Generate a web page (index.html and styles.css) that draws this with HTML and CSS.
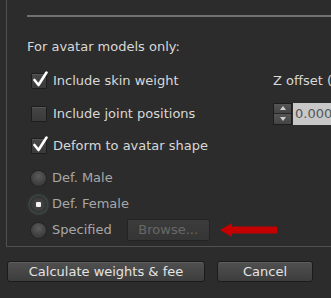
FILE: index.html
```html
<!DOCTYPE html>
<html>
<head>
	<link rel="stylesheet" href="styles.css">
</head>
<body>
	<div class="frame">
		<div class="sep"></div>
		<div class="heading">For avatar models only:</div>
		<div class="grid">
			<div class="row check-row">
				<span class="box"><svg class="tick" width="17" height="17" viewBox="0 0 17 17"><polyline points="2.5,9 6.5,14 14.5,1.5" fill="none" stroke="#fff" stroke-width="2.6" stroke-linecap="round" stroke-linejoin="round"/></svg></span>
				<span class="label">Include skin weight</span>
			</div>
			<div class="row check-row side">
				<span class="label">Z offset (</span>
			</div>
			<div class="row check-row">
				<span class="box"></span>
				<span class="label">Include joint positions</span>
			</div>
			<div class="row check-row side">
				<div class="spinner">
					<span class="spin up"></span>
					<span class="spin down"></span>
				</div>
				<div class="field">0.000</div>
			</div>
			<div class="row check-row last">
				<span class="box"><svg class="tick" width="17" height="17" viewBox="0 0 17 17"><polyline points="2.5,9 6.5,14 14.5,1.5" fill="none" stroke="#fff" stroke-width="2.6" stroke-linecap="round" stroke-linejoin="round"/></svg></span>
				<span class="label">Deform to avatar shape</span>
			</div>
		</div>
		<div class="radios">
			<div class="row radio-row">
				<span class="radio"></span>
				<span class="label dim">Def. Male</span>
			</div>
			<div class="row radio-row">
				<span class="radio on"></span>
				<span class="label dim">Def. Female</span>
			</div>
			<div class="row radio-row">
				<span class="radio"></span>
				<span class="label dim">Specified</span>
				<span class="browse">Browse...</span>
				<svg class="arrow" width="58" height="14" viewBox="0 0 58 14"><polygon points="0,7 12,0 12,3.5 57,3.5 57,10.5 12,10.5 12,14" fill="#c40000"/></svg>
			</div>
		</div>
	</div>
	<div class="buttons">
		<button class="btn calc">Calculate weights &amp; fee</button>
		<button class="btn cancel">Cancel</button>
	</div>
</body>
</html>
```

FILE: styles.css
```css
html {
	background: #2c2c2c;
}
body {
	margin: 0;
	font-family: "DejaVu Sans", sans-serif;
	font-size: 13px;
	color: #d8d8d8;
	overflow: hidden;
}
.frame {
	margin-left: 6px;
	height: 247px;
	border-left: 1px solid #505050;
	border-bottom: 1px solid #505050;
	padding: 15px 0 0 20px;
	box-sizing: border-box;
}
.sep {
	height: 2px;
	background: #6f6f6f;
}
.heading {
	margin-top: 22px;
	line-height: 16px;
	height: 25px;
}
.grid {
	display: grid;
	grid-template-columns: 246px 1fr;
	grid-template-rows: 33px 33px 32px;
}
.row {
	display: flex;
	align-items: center;
}
.check-row {
	padding-left: 4px;
}
.side {
	padding-left: 0;
}
.last {
	grid-column: 1;
}
.box {
	position: relative;
	width: 14px;
	height: 14px;
	border: 1px solid #1d1d1d;
	background: linear-gradient(#464646, #3a3a3a);
	box-shadow: inset 0 1px 0 #555;
	border-radius: 1px;
	margin-right: 6px;
	flex: none;
}
.tick {
	position: absolute;
	left: 0;
	top: -3px;
}
.label {
	line-height: 16px;
}
.dim {
	color: #a8a8a8;
}
.spinner {
	display: flex;
	flex-direction: column;
	width: 19px;
	height: 22px;
	border: 1px solid #1d1d1d;
	box-sizing: border-box;
	background: #3e3e3e;
}
.spin {
	flex: 1;
	display: flex;
	align-items: center;
	justify-content: center;
	background: linear-gradient(#555, #444);
}
.spin.up {
	border-bottom: 1px solid #262626;
}
.spin::after {
	content: "";
	border-left: 3px solid transparent;
	border-right: 3px solid transparent;
}
.spin.up::after {
	border-bottom: 4px solid #d0d0d0;
}
.spin.down::after {
	border-top: 4px solid #d0d0d0;
}
.field {
	margin-left: 1px;
	height: 22px;
	flex: 1;
	background: #c8c8c8;
	color: #555;
	line-height: 22px;
	padding-left: 2px;
}
.radios {
	margin-top: 3px;
	padding-left: 4px;
}
.radio-row {
	height: 26px;
}
.radio {
	width: 15px;
	height: 15px;
	border-radius: 50%;
	background: radial-gradient(circle at 50% 35%, #5c5c5c, #3a3a3a 75%);
	box-shadow: 0 0 0 1px #242424;
	margin-right: 6px;
	flex: none;
	display: flex;
	align-items: center;
	justify-content: center;
}
.radio.on {
	background: radial-gradient(circle, #4a4a4a, #383838 70%);
	box-shadow: 0 0 0 1px #2a2a2a, 0 0 3px 2px rgba(130, 190, 160, 0.35);
}
.radio.on::after {
	content: "";
	width: 5px;
	height: 5px;
	background: #f4f4f4;
	border-radius: 1px;
}
.browse {
	margin-left: 15px;
	width: 83px;
	height: 22px;
	box-sizing: border-box;
	border: 1px solid #232323;
	border-radius: 2px;
	background: linear-gradient(#3c3c3c, #353535);
	color: #686868;
	text-align: center;
	line-height: 20px;
}
.arrow {
	margin-left: 10px;
}
.buttons {
	display: flex;
	gap: 12px;
	margin: 14px 0 0 7px;
}
.btn {
	height: 21px;
	font-family: "DejaVu Sans", sans-serif;
	font-size: 13px;
	color: #e4e4e4;
	border: 1px solid #1b1b1b;
	border-radius: 3px;
	background: linear-gradient(#505050, #3d3d3d);
	box-shadow: inset 0 1px 0 #5e5e5e;
	padding: 0;
	line-height: 19px;
}
.calc {
	width: 198px;
}
.cancel {
	width: 96px;
}
```
